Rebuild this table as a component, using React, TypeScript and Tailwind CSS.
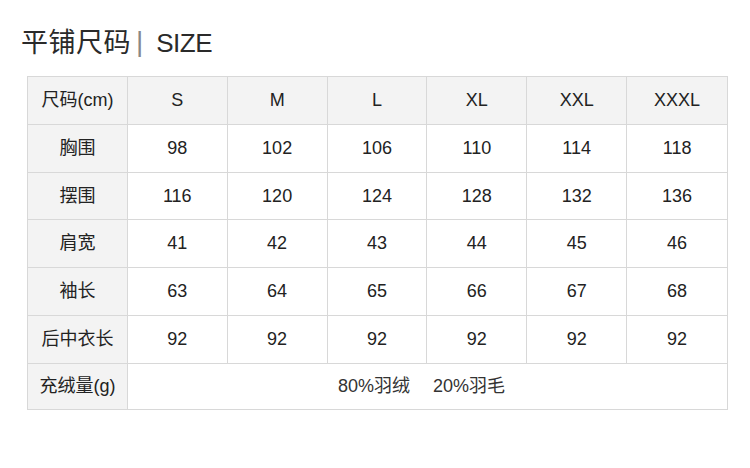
import React from 'react';

const sizes = ['S', 'M', 'L', 'XL', 'XXL', 'XXXL'];

const rows: { label: string; values: number[]; h: string }[] = [
  { label: '胸围', values: [98, 102, 106, 110, 114, 118], h: 'h-[48px]' },
  { label: '摆围', values: [116, 120, 124, 128, 132, 136], h: 'h-[47px]' },
  { label: '肩宽', values: [41, 42, 43, 44, 45, 46], h: 'h-[48px]' },
  { label: '袖长', values: [63, 64, 65, 66, 67, 68], h: 'h-[48px]' },
  { label: '后中衣长', values: [92, 92, 92, 92, 92, 92], h: 'h-[48px]' },
];

const font = { fontFamily: '"Liberation Sans", "Noto Sans CJK SC", sans-serif' };

const App: React.FC = () => {
  return (
    <div className="w-[750px] h-[468px] bg-white text-[#222]" style={font}>
      <h1 className="pl-[21px] pt-[24px] h-[76px] flex items-start text-[#2a2a2a] font-normal">
        <span className="text-[27px] leading-[38px] tracking-[0.5px]">平铺尺码</span>
        <span className="ml-[5px] text-[28px] leading-[36px] text-[#888] font-light">|</span>
        <span className="ml-[13px] text-[26px] leading-[38px] tracking-[-0.5px]">SIZE</span>
      </h1>

      <div className="ml-[27px] w-[701px] border border-[#d8d8d8]">
        {/* header */}
        <div className="grid grid-cols-7 h-[48px] bg-[#f3f3f3] border-b border-[#d8d8d8] text-[18px]">
          <div className="flex items-center justify-center border-r border-[#d8d8d8]">尺码(cm)</div>
          {sizes.map((s, i) => (
            <div
              key={s}
              className={`flex items-center justify-center ${i < 5 ? 'border-r border-[#d8d8d8]' : ''}`}
            >
              {s}
            </div>
          ))}
        </div>

        {rows.map((r) => (
          <div key={r.label} className={`grid grid-cols-7 ${r.h} border-b border-[#d8d8d8] text-[18px]`}>
            <div className="flex items-center justify-center bg-[#f3f3f3] border-r border-[#d8d8d8]">
              {r.label}
            </div>
            {r.values.map((v, i) => (
              <div
                key={i}
                className={`flex items-center justify-center ${i < 5 ? 'border-r border-[#d8d8d8]' : ''}`}
              >
                {v}
              </div>
            ))}
          </div>
        ))}

        {/* fill row */}
        <div className="grid grid-cols-7 h-[45px]">
          <div className="flex items-center justify-center bg-[#f3f3f3] border-r border-[#d8d8d8] text-[18px]">
            充绒量(g)
          </div>
          <div className="col-span-6 flex items-center justify-center gap-[23px] pr-[12px] text-[18px] text-[#333]">
            <span>80%羽绒</span>
            <span>20%羽毛</span>
          </div>
        </div>
      </div>
    </div>
  );
};

export default App;
